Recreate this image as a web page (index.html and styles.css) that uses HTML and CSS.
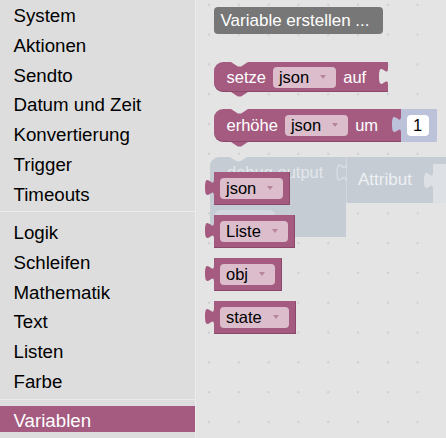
FILE: index.html
```html
<!DOCTYPE html>
<html lang="de">
<head>
<meta charset="utf-8">
<title>Blockly Variablen</title>
<link rel="stylesheet" href="styles.css">
</head>
<body>
<div class="app">
  <nav class="toolbox">
    <div class="cat">System</div>
    <div class="cat">Aktionen</div>
    <div class="cat">Sendto</div>
    <div class="cat">Datum und Zeit</div>
    <div class="cat">Konvertierung</div>
    <div class="cat">Trigger</div>
    <div class="cat">Timeouts</div>
    <div class="sep"></div>
    <div class="cat">Logik</div>
    <div class="cat">Schleifen</div>
    <div class="cat">Mathematik</div>
    <div class="cat">Text</div>
    <div class="cat">Listen</div>
    <div class="cat">Farbe</div>
    <div class="sep"></div>
    <div class="cat cat-active">Variablen</div>
  </nav>

  <main class="workspace">
    <div class="ghost">
      <div class="ghost-main">
        <div class="ghost-label">debug output</div>
        <div class="ghost-field"></div>
      </div>
      <div class="ghost-attr">
        <svg class="ghost-tab" width="9" height="30" viewBox="0 0 9 30"><path d="M9,24 c0,-11.25 -9,9 -9,-8.44 s9,2.81 9,-8.44" fill="none" stroke="#dde1e6" stroke-width="1.2"/></svg>
        <div class="ghost-attr-label">Attribut</div>
        <div class="ghost-piece">
          <svg class="tab" width="10" height="39" viewBox="0 0 10 39"><path d="M10.5,25 H10 c0,-11.25 -9,9 -9,-8.44 s9,2.81 9,-8.44 H10.5 Z" fill="#dde1e5"/></svg>
          <div class="ghost-piece-body"></div>
        </div>
      </div>
    </div>

    <div class="flyout">
      <div class="btn">Variable erstellen ...</div>

      <div class="stmt stmt-set">
        <span class="label">setze</span>
        <span class="field">json<i class="arrow"></i></span>
        <span class="label">auf</span>
        <svg class="socket" width="9" height="30" viewBox="0 0 9 30"><path d="M9.5,6 H9 c0,11.25 -9,-9 -9,8.44 s9,-2.81 9,8.44 H9.5 Z" fill="#e4e4e4"/></svg>
      </div>

      <div class="stmt-row">
        <div class="stmt stmt-inc">
          <span class="label">erhöhe</span>
          <span class="field">json<i class="arrow"></i></span>
          <span class="label">um</span>
        </div>
        <div class="shadow">
          <svg class="tab" width="9" height="33" viewBox="0 0 9 33"><path d="M9.6,24 H9 c0,-11.25 -9,9 -9,-8.44 s9,2.81 9,-8.44 H9.6 Z" fill="#bdc2db"/></svg>
          <div class="shadow-body"><span class="num">1</span></div>
        </div>
      </div>

      <div class="getter">
        <svg class="tab" width="10" height="32" viewBox="0 0 10 32"><path d="M10.6,24 H10 c0,-11.25 -9,9 -9,-8.44 s9,2.81 9,-8.44 H10.6 Z" fill="#a55b80"/></svg>
        <div class="getter-body"><span class="field">json<i class="arrow"></i></span></div>
      </div>
      <div class="getter">
        <svg class="tab" width="10" height="32" viewBox="0 0 10 32"><path d="M10.6,24 H10 c0,-11.25 -9,9 -9,-8.44 s9,2.81 9,-8.44 H10.6 Z" fill="#a55b80"/></svg>
        <div class="getter-body"><span class="field">Liste<i class="arrow"></i></span></div>
      </div>
      <div class="getter">
        <svg class="tab" width="10" height="32" viewBox="0 0 10 32"><path d="M10.6,24 H10 c0,-11.25 -9,9 -9,-8.44 s9,2.81 9,-8.44 H10.6 Z" fill="#a55b80"/></svg>
        <div class="getter-body"><span class="field">obj<i class="arrow"></i></span></div>
      </div>
      <div class="getter">
        <svg class="tab" width="10" height="32" viewBox="0 0 10 32"><path d="M10.6,24 H10 c0,-11.25 -9,9 -9,-8.44 s9,2.81 9,-8.44 H10.6 Z" fill="#a55b80"/></svg>
        <div class="getter-body"><span class="field">state<i class="arrow"></i></span></div>
      </div>
    </div>
  </main>
</div>
</body>
</html>
```

FILE: styles.css
```css
html, body {
  margin: 0;
  padding: 0;
}

body {
  font-family: "Liberation Sans", Arial, sans-serif;
  width: 446px;
  height: 438px;
  overflow: hidden;
  background: #e4e4e4;
}

.app {
  display: flex;
  height: 438px;
}

/* ---------- toolbox ---------- */
.toolbox {
  width: 195px;
  flex: none;
  background: #dddddd;
  border-right: 1px solid #ececec;
  padding-top: 1.4px;
  box-sizing: content-box;
}

.cat {
  height: 26px;
  line-height: 29.7px;
  margin-bottom: 3.7px;
  padding-left: 13.5px;
  font-size: 18.7px;
  color: #000;
  white-space: nowrap;
}

.cat-active {
  background: #a55b80;
  color: #fff;
  margin-bottom: 0;
}

.sep {
  height: 9.2px;
  background-image: linear-gradient(#ebebeb, #ebebeb);
  background-repeat: no-repeat;
  background-size: 100% 1px;
  background-position: 0 2px;
}

/* ---------- workspace ---------- */
.workspace {
  flex: 1;
  position: relative;
  overflow: hidden;
  background-color: #e4e4e4;
  background-image: radial-gradient(circle, #d0d0d0 0, #d0d0d0 1px, rgba(208,208,208,0) 1.6px);
  background-size: 29.8px 29.8px;
  background-position: -1.9px -10.1px;
}

/* faded block that lies in the workspace behind the flyout */
.ghost {
  position: absolute;
  left: 14px;
  top: 157px;
  display: flex;
  align-items: flex-start;
}

.ghost-main {
  position: relative;
  width: 136px;
  height: 80px;
  background: #c5ccd4;
  border-radius: 9px 0 0 9px;
}

.ghost-main::before {
  content: "";
  position: absolute;
  left: 20px;
  top: 0;
  width: 17px;
  height: 4.5px;
  background: #e4e4e4;
  clip-path: polygon(0 0, 100% 0, 10.1px 100%, 6.9px 100%);
}

.ghost-label {
  padding: 6.3px 0 0 17px;
  line-height: 19px;
  font-size: 16.5px;
  color: #e3e7eb;
  white-space: nowrap;
}

.ghost-field {
  margin: 27.7px 0 0 5px;
  width: 60px;
  height: 22px;
  border-radius: 5px;
  background: #d2d8de;
}

.ghost-attr {
  position: relative;
  display: flex;
  align-items: flex-start;
  width: 110px;
  height: 46px;
  background: #c5ccd4;
  border-left: 1px solid #d3d8de;
  box-sizing: border-box;
}

.ghost-tab {
  flex: none;
  margin-left: -10px;
  overflow: visible;
}

.ghost-attr-label {
  padding: 13.3px 0 0 12px;
  line-height: 19px;
  font-size: 17px;
  color: #eef0f3;
  white-space: nowrap;
}

.ghost-piece {
  display: flex;
  margin-left: auto;
  margin-top: 7px;
  height: 39px;
}

.ghost-piece .tab {
  flex: none;
  overflow: visible;
}

.ghost-piece-body {
  width: 23px;
  height: 39px;
  background: #dde1e5;
}

/* ---------- flyout ---------- */
.flyout {
  position: relative;
  z-index: 1;
  display: flex;
  flex-direction: column;
  align-items: flex-start;
  padding: 7px 0 0 18px;
}

.btn {
  box-sizing: border-box;
  width: 169px;
  height: 27px;
  padding: 0 6.5px;
  display: flex;
  align-items: center;
  background: #777777;
  color: #fff;
  border-radius: 4px;
  font-size: 17px;
  white-space: nowrap;
  margin-bottom: 28px;
}

.stmt {
  position: relative;
  display: flex;
  align-items: center;
  gap: 7px;
  height: 30px;
  padding-left: 12.5px;
  background: #a55b80;
  border-radius: 9px 0 0 9px;
  color: #fff;
  font-size: 16.5px;
  white-space: nowrap;
  box-shadow: inset 0 -1px 0 rgba(90, 40, 65, 0.35);
}

.stmt::before {
  content: "";
  position: absolute;
  left: 17px;
  top: 0;
  width: 17px;
  height: 4.5px;
  background: #e4e4e4;
  clip-path: polygon(0 0, 100% 0, 10.1px 100%, 6.9px 100%);
}

.stmt::after {
  content: "";
  position: absolute;
  left: 17px;
  bottom: -4.5px;
  width: 17px;
  height: 4.5px;
  background: #a55b80;
  clip-path: polygon(0 0, 100% 0, 10.1px 100%, 6.9px 100%);
}

.stmt-set {
  margin-bottom: 17px;
}

.socket {
  flex: none;
  margin-left: 6px;
  overflow: visible;
}

.stmt-row {
  display: flex;
  margin-bottom: 30px;
}

.stmt-inc {
  height: 33px;
  padding-right: 22.5px;
}

.shadow {
  position: relative;
  display: flex;
  height: 33px;
}

.shadow .tab {
  flex: none;
  margin-left: -9px;
  overflow: visible;
}

.shadow-body {
  display: flex;
  align-items: center;
  height: 33px;
  padding: 0 8px 0 6px;
  background: #bdc2db;
}

.num {
  display: flex;
  align-items: center;
  justify-content: center;
  width: 22px;
  height: 21px;
  background: #fff;
  border-radius: 4px;
  font-size: 16.5px;
  color: #000;
}

.label {
  line-height: 19px;
}

.field {
  display: flex;
  align-items: center;
  height: 21px;
  padding: 0 10px 0 6px;
  background: #dbbdcc;
  border-radius: 4px;
  color: #000;
  font-size: 16.5px;
  white-space: nowrap;
}

.arrow {
  display: block;
  width: 0;
  height: 0;
  margin-left: 11px;
  margin-top: -1px;
  border-left: 3px solid transparent;
  border-right: 3px solid transparent;
  border-top: 4px solid #b8849e;
}

.getter {
  display: flex;
  height: 32.5px;
  margin-left: -10px;
  margin-bottom: 10.5px;
}

.getter .tab {
  flex: none;
  overflow: visible;
}

.getter-body {
  display: flex;
  align-items: center;
  height: 32.5px;
  padding: 0 7px 0 6px;
  background: #a55b80;
  box-shadow: inset -1px -1px 0 rgba(90, 40, 65, 0.35);
}
```
